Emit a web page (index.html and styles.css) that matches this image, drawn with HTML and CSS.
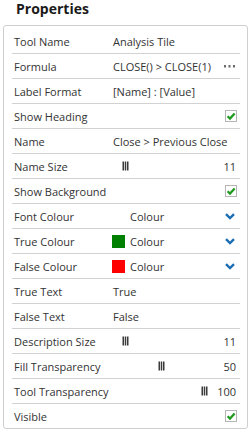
FILE: index.html
```html
<!DOCTYPE html>
<html lang="en">
<head>
    <meta charset="UTF-8">
    <meta name="viewport" content="width=device-width, initial-scale=1.0">
    <title>Properties</title>
    <link rel="stylesheet" href="styles.css">
</head>
<body>

    <h2 class="title">Properties</h2>

    <!-- Property grid -->
    <div class="panel">
        <div class="row">
            <span class="label">Tool Name</span>
            <span class="value">Analysis Tile</span>
        </div>
        <div class="row">
            <span class="label">Formula</span>
            <span class="value">
                <span class="grow">CLOSE() &gt; CLOSE(1)</span>
                <svg class="dots" width="11" height="3" viewBox="0 0 11 3">
                    <rect x="0" y="0" width="2" height="2.5" fill="#6d6d6d"/>
                    <rect x="4.5" y="0" width="2" height="2.5" fill="#6d6d6d"/>
                    <rect x="9" y="0" width="2" height="2.5" fill="#6d6d6d"/>
                </svg>
            </span>
        </div>
        <div class="row">
            <span class="label">Label Format</span>
            <span class="value">[Name] : [Value]</span>
        </div>
        <div class="row">
            <span class="label">Show Heading</span>
            <span class="value end">
                <svg class="check" width="12" height="12" viewBox="0 0 12 12">
                    <rect x="0.5" y="0.5" width="11" height="11" fill="#fff" stroke="#b5b5b5"/>
                    <path d="M2.6 6.2 L5 8.6 L9.6 3.4" fill="none" stroke="#1e9a1e" stroke-width="2.2"/>
                </svg>
            </span>
        </div>
        <div class="row">
            <span class="label">Name</span>
            <span class="value">Close &gt; Previous Close</span>
        </div>
        <div class="row">
            <span class="label">Name Size</span>
            <span class="value">
                <span class="track">
                    <svg class="handle" style="margin-left: 9px" width="7" height="10" viewBox="0 0 7 10">
                        <rect x="0.5" y="0.5" width="1.5" height="9" fill="#3a3a3a"/>
                        <rect x="2.75" y="0.5" width="1.5" height="9" fill="#3a3a3a"/>
                        <rect x="5" y="0.5" width="1.5" height="9" fill="#3a3a3a"/>
                    </svg>
                </span>
                <span class="num">11</span>
            </span>
        </div>
        <div class="row">
            <span class="label">Show Background</span>
            <span class="value end">
                <svg class="check" width="12" height="12" viewBox="0 0 12 12">
                    <rect x="0.5" y="0.5" width="11" height="11" fill="#fff" stroke="#b5b5b5"/>
                    <path d="M2.6 6.2 L5 8.6 L9.6 3.4" fill="none" stroke="#1e9a1e" stroke-width="2.2"/>
                </svg>
            </span>
        </div>
        <div class="row">
            <span class="label">Font Colour</span>
            <span class="value">
                <span class="swatch"></span>
                <span class="grow">Colour</span>
                <svg class="chevron" width="10" height="7" viewBox="0 0 10 7">
                    <path d="M1 1.2 L5 5 L9 1.2" fill="none" stroke="#1b6db3" stroke-width="2.4"/>
                </svg>
            </span>
        </div>
        <div class="row">
            <span class="label">True Colour</span>
            <span class="value">
                <span class="swatch green"></span>
                <span class="grow">Colour</span>
                <svg class="chevron" width="10" height="7" viewBox="0 0 10 7">
                    <path d="M1 1.2 L5 5 L9 1.2" fill="none" stroke="#1b6db3" stroke-width="2.4"/>
                </svg>
            </span>
        </div>
        <div class="row">
            <span class="label">False Colour</span>
            <span class="value">
                <span class="swatch red"></span>
                <span class="grow">Colour</span>
                <svg class="chevron" width="10" height="7" viewBox="0 0 10 7">
                    <path d="M1 1.2 L5 5 L9 1.2" fill="none" stroke="#1b6db3" stroke-width="2.4"/>
                </svg>
            </span>
        </div>
        <div class="row">
            <span class="label">True Text</span>
            <span class="value">True</span>
        </div>
        <div class="row">
            <span class="label">False Text</span>
            <span class="value">False</span>
        </div>
        <div class="row">
            <span class="label">Description Size</span>
            <span class="value">
                <span class="track">
                    <svg class="handle" style="margin-left: 9px" width="7" height="10" viewBox="0 0 7 10">
                        <rect x="0.5" y="0.5" width="1.5" height="9" fill="#3a3a3a"/>
                        <rect x="2.75" y="0.5" width="1.5" height="9" fill="#3a3a3a"/>
                        <rect x="5" y="0.5" width="1.5" height="9" fill="#3a3a3a"/>
                    </svg>
                </span>
                <span class="num">11</span>
            </span>
        </div>
        <div class="row">
            <span class="label">Fill Transparency</span>
            <span class="value">
                <span class="track">
                    <svg class="handle" style="margin-left: 45px" width="7" height="10" viewBox="0 0 7 10">
                        <rect x="0.5" y="0.5" width="1.5" height="9" fill="#3a3a3a"/>
                        <rect x="2.75" y="0.5" width="1.5" height="9" fill="#3a3a3a"/>
                        <rect x="5" y="0.5" width="1.5" height="9" fill="#3a3a3a"/>
                    </svg>
                </span>
                <span class="num">50</span>
            </span>
        </div>
        <div class="row">
            <span class="label">Tool Transparency</span>
            <span class="value">
                <span class="track">
                    <svg class="handle" style="margin-left: 88px" width="7" height="10" viewBox="0 0 7 10">
                        <rect x="0.5" y="0.5" width="1.5" height="9" fill="#3a3a3a"/>
                        <rect x="2.75" y="0.5" width="1.5" height="9" fill="#3a3a3a"/>
                        <rect x="5" y="0.5" width="1.5" height="9" fill="#3a3a3a"/>
                    </svg>
                </span>
                <span class="num">100</span>
            </span>
        </div>
        <div class="row last">
            <span class="label">Visible</span>
            <span class="value end">
                <svg class="check" width="12" height="12" viewBox="0 0 12 12">
                    <rect x="0.5" y="0.5" width="11" height="11" fill="#fff" stroke="#b5b5b5"/>
                    <path d="M2.6 6.2 L5 8.6 L9.6 3.4" fill="none" stroke="#1e9a1e" stroke-width="2.2"/>
                </svg>
            </span>
        </div>
    </div>

</body>
</html>
```

FILE: styles.css
```css
body {
    font-family: "Open Sans", "Liberation Sans", sans-serif;
    font-size: 11px;
    color: #333;
    margin: 0;
    background: #fff;
}
.title {
    font-size: 14px;
    font-weight: bold;
    line-height: 18px;
    color: #1a1a1a;
    margin: 0 0 7px 16px;
}
.panel {
    box-sizing: border-box;
    width: 245px;
    margin-left: 3px;
    border: 1px solid #cfcfcf;
    border-radius: 3px;
    padding: 3px 7px 0 8px;
}
.row {
    box-sizing: border-box;
    height: 25px;
    display: grid;
    grid-template-columns: 101px 1fr;
    align-items: center;
    border-bottom: 1px solid #d2d2d2;
}
.row.last {
    border-bottom: none;
    height: 24px;
}
.label {
    padding-left: 2px;
    white-space: nowrap;
}
.value {
    display: flex;
    align-items: center;
    padding-right: 4px;
    white-space: nowrap;
}
.value.end {
    justify-content: flex-end;
    padding-right: 3px;
}
.grow {
    flex: 1;
}
.dots {
    margin-right: 1px;
}
.chevron {
    margin-right: 1px;
}
.swatch {
    width: 13px;
    height: 13px;
    margin: 0 5px 0 -1px;
}
.swatch.green {
    background: #008000;
}
.swatch.red {
    background: #ff0000;
}
.track {
    flex: 1;
    display: flex;
    align-items: center;
}
.handle {
    display: block;
}
.num {
    text-align: right;
}
```
